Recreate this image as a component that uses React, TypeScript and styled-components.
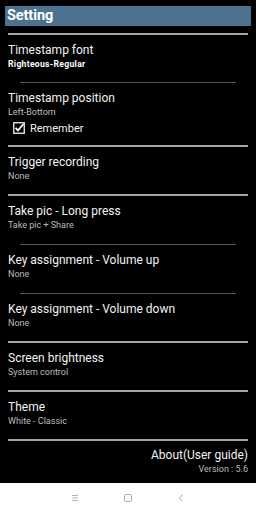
import React from "react";
import styled, { createGlobalStyle } from "styled-components";

const GlobalStyle = createGlobalStyle`
  html, body {
    margin: 0;
    padding: 0;
    background: #000;
  }
  body {
    font-family: Roboto, "Liberation Sans", sans-serif;
  }
`;

const Page = styled.div`
  width: 256px;
  height: 512px;
  display: flex;
  flex-direction: column;
  background: #000;
  overflow: hidden;
`;

const Content = styled.div`
  flex: 1 1 auto;
  padding: 6px 8px 0 8px;
`;

const Header = styled.div`
  margin: 0 -3px;
  height: 20px;
  background: #4d7191;
  color: #fff;
  font-size: 14.5px;
  font-weight: 700;
  line-height: 20px;
  padding-left: 2px;
  letter-spacing: -0.1px;
`;

const Separator = styled.div<{ $short?: boolean }>`
  height: ${(p) => (p.$short ? "1px" : "2px")};
  background: ${(p) => (p.$short ? "#555" : "#a4a4a4")};
  margin: ${(p) => (p.$short ? "0.5px 12px" : "0")};
`;

const HeaderGap = styled.div`
  height: 7px;
`;

const Item = styled.div<{ $bottom?: number }>`
  padding: 8px 0 ${(p) => p.$bottom ?? 11}px 0;
`;

const Title = styled.div`
  color: #f2f2f2;
  font-size: 12px;
  line-height: 14px;
  white-space: nowrap;
`;

const Sub = styled.div<{ $bold?: boolean }>`
  color: ${(p) => (p.$bold ? "#fff" : "#bdbdbd")};
  font-size: ${(p) => (p.$bold ? "8.6px" : "9px")};
  font-weight: ${(p) => (p.$bold ? 700 : 400)};
  line-height: 14px;
  letter-spacing: ${(p) => (p.$bold ? "0.3px" : "0")};
`;

const CheckRow = styled.label`
  display: flex;
  align-items: center;
  gap: 5px;
  height: 16px;
  margin-top: 1px;
  padding-left: 5px;
  color: #f2f2f2;
  font-size: 11px;
`;

const About = styled.div`
  padding: 7px 0 0 0;
  text-align: right;
`;

const AboutTitle = styled.div`
  color: #f2f2f2;
  font-size: 12px;
  line-height: 14px;
`;

const Version = styled.div`
  color: #bdbdbd;
  font-size: 9px;
  line-height: 14px;
`;

const NavBar = styled.div`
  flex: 0 0 29px;
  background: #fff;
  display: flex;
  align-items: center;
  justify-content: center;
  gap: 43px;
`;

const NavIcon = styled.svg`
  width: 10px;
  height: 10px;
  display: block;
`;

const CheckBox = () => (
  <svg width="12" height="12" viewBox="0 0 12 12">
    <rect x="0.75" y="0.75" width="10.5" height="10.5" fill="none" stroke="#f2f2f2" strokeWidth="1.3" />
    <path d="M2.6 5.8 L5 8.3 L10.5 2" fill="none" stroke="#fff" strokeWidth="1.8" />
  </svg>
);

const Row = ({ title, sub, bold, bottom }: { title: string; sub: string; bold?: boolean; bottom?: number }) => (
  <Item $bottom={bottom}>
    <Title>{title}</Title>
    <Sub $bold={bold}>{sub}</Sub>
  </Item>
);

export default function App() {
  return (
    <Page>
      <GlobalStyle />
      <Content>
        <Header>Setting</Header>
        <HeaderGap />
        <Separator />
        <Row title="Timestamp font" sub="Righteous-Regular" bold bottom={10} />
        <Separator $short />
        <Item $bottom={9}>
          <Title>Timestamp position</Title>
          <Sub>Left-Bottom</Sub>
          <CheckRow>
            <CheckBox />
            Remember
          </CheckRow>
        </Item>
        <Separator />
        <Row title="Trigger recording" sub="None" />
        <Separator />
        <Row title="Take pic - Long press" sub="Take pic + Share" />
        <Separator $short />
        <Row title="Key assignment - Volume up" sub="None" />
        <Separator $short />
        <Row title="Key assignment - Volume down" sub="None" />
        <Separator />
        <Row title="Screen brightness" sub="System control" />
        <Separator />
        <Row title="Theme" sub="White - Classic" />
        <Separator />
        <About>
          <AboutTitle>About(User guide)</AboutTitle>
          <Version>Version : 5.6</Version>
        </About>
      </Content>
      <NavBar>
        <NavIcon viewBox="0 0 10 10">
          <path d="M2 2.5 H8 M2 5 H8 M2 7.5 H8" stroke="#aaa" strokeWidth="0.9" />
        </NavIcon>
        <NavIcon viewBox="0 0 10 10">
          <rect x="1.5" y="1.5" width="7" height="7" rx="1" fill="none" stroke="#aaa" strokeWidth="1" />
        </NavIcon>
        <NavIcon viewBox="0 0 10 10">
          <path d="M6.5 1.5 L3.5 5 L6.5 8.5" fill="none" stroke="#aaa" strokeWidth="1" />
        </NavIcon>
      </NavBar>
    </Page>
  );
}
